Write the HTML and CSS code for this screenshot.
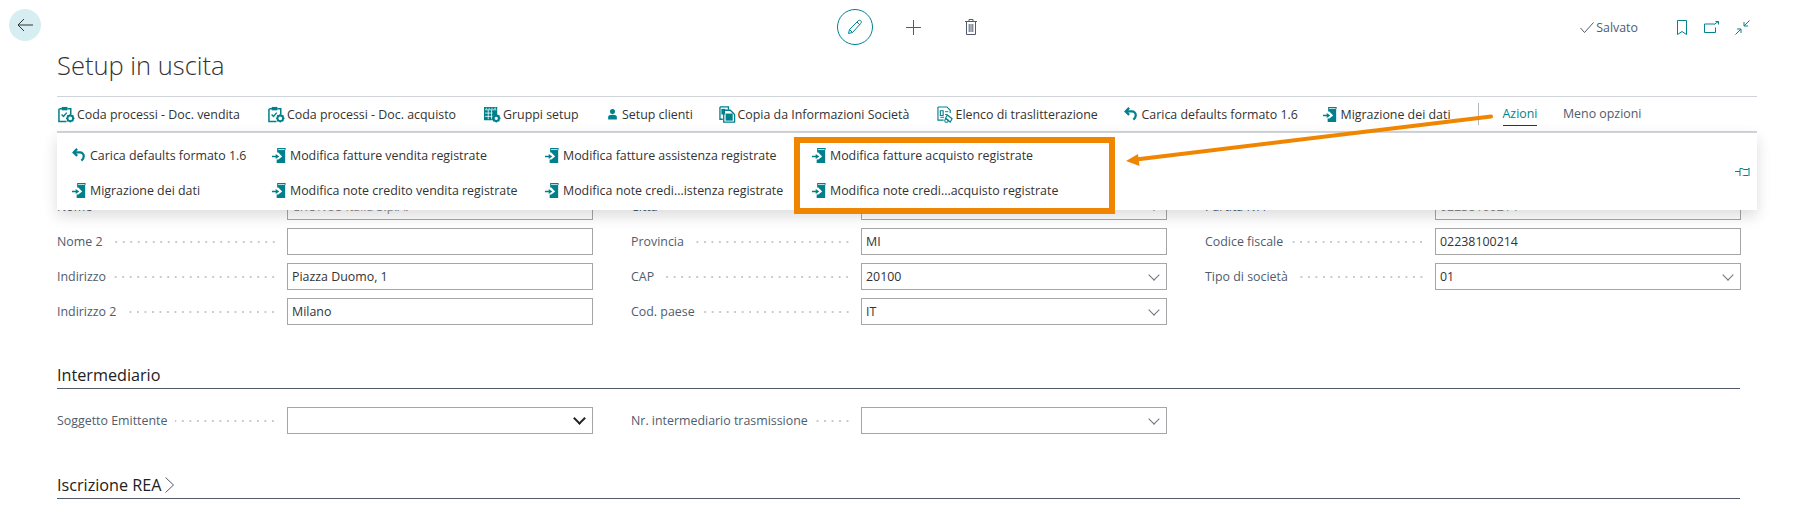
FILE: index.html
```html
<!DOCTYPE html>
<html lang="it">
<head>
<meta charset="utf-8">
<title>Setup in uscita</title>
<link rel="stylesheet" href="styles.css">
</head>
<body>
<svg class="defs" width="0" height="0" aria-hidden="true">
  <symbol id="i-queue" viewBox="0 0 18 18">
    <path d="M1.500 3h3M10 3h3.500v6M1 3v13.500h8" fill="none" stroke="currentColor" stroke-width="1.600"/>
    <rect x="4" y="1" width="6" height="3.600" fill="currentColor"/>
    <path d="M3.800 9l2 2 3.500-4" fill="none" stroke="currentColor" stroke-width="1.500"/>
    <circle cx="13" cy="13" r="3" fill="none" stroke="currentColor" stroke-width="2"/>
    <path d="M13 8.500v2M13 15.500v2M8.500 13h2M15.500 13h2M9.800 9.800l1.400 1.400M14.800 14.800l1.400 1.400M9.800 16.200l1.400-1.400M14.800 11.200l1.400-1.400" stroke="currentColor" stroke-width="1.300"/>
  </symbol>
  <symbol id="i-groups" viewBox="0 0 18 18">
    <path d="M0 1h14v8.500H9.500V15H0z" fill="currentColor"/>
    <path d="M1 4h12M1 7.500h8M1 11h8M4.500 4v10M8 4v10" stroke="#fff" stroke-width=".8"/>
    <path d="M11 1.800h1.500v1h-1.500zM2 1.800h1v1H2zM5 1.800h1v1H5zM8 1.800h1v1H8z" fill="#fff"/>
    <circle cx="13" cy="13" r="2.800" fill="none" stroke="currentColor" stroke-width="2.200"/>
    <path d="M13 8.500v2M13 15.500v2M8.500 13h2M15.500 13h2M9.800 9.800l1.400 1.400M14.800 14.800l1.400 1.400M9.800 16.200l1.400-1.400M14.800 11.200l1.400-1.400" stroke="currentColor" stroke-width="1.400"/>
  </symbol>
  <symbol id="i-user" viewBox="0 0 18 18">
    <circle cx="9" cy="5" r="3.500" fill="currentColor"/>
    <path d="M3 16v-3.500C3 10.500 5 9.500 9 9.500s6 1 6 3V16z" fill="currentColor"/>
  </symbol>
  <symbol id="i-copy" viewBox="0 0 18 18">
    <path d="M1 1h9v3M1 1v13h3" fill="none" stroke="currentColor" stroke-width="1.400"/>
    <path d="M5 4.500h7l4.500 4.500v8H5z" fill="none" stroke="currentColor" stroke-width="1.400"/>
    <rect x="2.500" y="3" width="4" height="6" fill="currentColor"/>
    <rect x="7" y="8" width="7.500" height="7.500" fill="currentColor"/>
  </symbol>
  <symbol id="i-list" viewBox="0 0 18 18">
    <path d="M1 1h9.500l3.500 3.500v3M1 1v14h6" fill="none" stroke="currentColor" stroke-width="1.200"/>
    <path d="M3.500 5h3v5h-3z" fill="none" stroke="currentColor" stroke-width="1.200"/>
    <path d="M8.500 6h3.500M8.500 9h2M3.500 12h4" stroke="currentColor" stroke-width="1"/>
    <path d="M11 9.500l5 4-2 3.500-5-4z" fill="none" stroke="currentColor" stroke-width="1.200"/>
    <circle cx="10" cy="15.500" r="1.800" fill="none" stroke="currentColor" stroke-width="1.100"/>
  </symbol>
  <symbol id="i-undo" viewBox="0 0 18 18">
    <path d="M6.500 2L2.800 5.700l3.700 3.700" fill="none" stroke="currentColor" stroke-width="2.400"/>
    <path d="M3.200 5.700h6.300a4 4 0 0 1 4 4c0 2-1 3.500-2.500 4.800" fill="none" stroke="currentColor" stroke-width="2.400"/>
  </symbol>
  <symbol id="i-doc" viewBox="0 0 18 18">
    <path d="M6.500 1h9v2h-.5v14H6v-3.800h1.800l4-3.200-4-4.200H6.500z" fill="currentColor"/>
    <path d="M7.500 2.700h7" stroke="#fff" stroke-width=".8"/>
    <path d="M1 9.200h4V7.300L8.800 10 5 12.700v-1.900H1z" fill="currentColor"/>
  </symbol>
</svg>

<main class="page">
  <header class="topbar">
    <button class="back" aria-label="Indietro">
      <svg width="16" height="14" viewBox="0 0 16 14"><path d="M7 1L1 7l6 6M1 7h15" fill="none" stroke="#333" stroke-width="1"/></svg>
    </button>
    <div class="center-actions">
      <span class="edit">
        <svg width="16" height="16" viewBox="0 0 16 16"><path d="M1.500 14.500l1-4L11 2c1-1 2-1 2.800-.2s.8 1.800-.2 2.800L5.500 13.500zM2.500 10.500l3 3M10 3l3 3" fill="none" stroke="#00838f" stroke-width="1"/></svg>
      </span>
      <svg class="plus" width="15" height="15" viewBox="0 0 15 15"><path d="M7.500 0v15M0 7.500h15" stroke="#505c6d" stroke-width="1"/></svg>
      <svg class="trash" width="12" height="16" viewBox="0 0 12 16"><path d="M0 2.500h12M4 2.500V.5h4v2M1.500 2.500v13h9v-13" fill="none" stroke="#505c6d" stroke-width="1"/><path d="M4.200 5v8M6 5v8M7.800 5v8" stroke="#505c6d" stroke-width="1"/></svg>
    </div>
    <div class="status">
      <svg class="check" width="14" height="11" viewBox="0 0 14 11"><path d="M.5 6l4 4.500L13.500.5" fill="none" stroke="#505c6d" stroke-width="1"/></svg>
      <span class="saved">Salvato</span>
      <svg class="bookmark" width="10" height="15" viewBox="0 0 10 15"><path d="M.5.500h9v14L5 11.500.5 14.500z" fill="none" stroke="#00838f" stroke-width="1"/></svg>
      <svg class="share" width="15" height="12" viewBox="0 0 15 12"><path d="M10 3H.5v8.500h11V6.500M10 3.500L14.500.5M11.500.5h3v3" fill="none" stroke="#00838f" stroke-width="1"/></svg>
      <svg class="shrink" width="15" height="15" viewBox="0 0 15 15"><path d="M14.500.5L9 6M9 2v4h4M.5 14.500L6 9M2 9h4v4" fill="none" stroke="#00838f" stroke-width="1"/></svg>
    </div>
  </header>

  <h1 class="title">Setup in uscita</h1>

  <nav class="actionbar">
    <a class="action a1"><svg class="ico"><use href="#i-queue"/></svg>Coda processi - Doc. vendita</a>
    <a class="action a2"><svg class="ico"><use href="#i-queue"/></svg>Coda processi - Doc. acquisto</a>
    <a class="action a3"><svg class="ico"><use href="#i-groups"/></svg>Gruppi setup</a>
    <a class="action a4"><svg class="ico small"><use href="#i-user"/></svg>Setup clienti</a>
    <a class="action a5"><svg class="ico"><use href="#i-copy"/></svg>Copia da Informazioni Società</a>
    <a class="action a6"><svg class="ico"><use href="#i-list"/></svg>Elenco di traslitterazione</a>
    <a class="action a7"><svg class="ico"><use href="#i-undo"/></svg>Carica defaults formato 1.6</a>
    <a class="action a8"><svg class="ico"><use href="#i-doc"/></svg>Migrazione dei dati</a>
    <span class="sep"></span>
    <a class="tab active">Azioni</a>
    <a class="tab">Meno opzioni</a>
  </nav>

  <section class="form first">
    <div class="col">
      <div class="row"><label>Nome</label><span class="input ro">CRONUS Italia S.p.A.</span></div>
      <div class="row"><label>Nome 2</label><span class="input"></span></div>
      <div class="row"><label>Indirizzo</label><span class="input">Piazza Duomo, 1</span></div>
      <div class="row"><label>Indirizzo 2</label><span class="input">Milano</span></div>
    </div>
    <div class="col">
      <div class="row"><label>Città</label><span class="input select"></span></div>
      <div class="row"><label>Provincia</label><span class="input">MI</span></div>
      <div class="row"><label>CAP</label><span class="input select">20100</span></div>
      <div class="row"><label>Cod. paese</label><span class="input select">IT</span></div>
    </div>
    <div class="col">
      <div class="row"><label>Partita IVA</label><span class="input ro">02238100214</span></div>
      <div class="row"><label>Codice fiscale</label><span class="input">02238100214</span></div>
      <div class="row"><label>Tipo di società</label><span class="input select">01</span></div>
    </div>
  </section>

  <h2 class="section sec-int">Intermediario</h2>
  <section class="form">
    <div class="col">
      <div class="row"><label>Soggetto Emittente</label><span class="input native"></span></div>
    </div>
    <div class="col">
      <div class="row"><label>Nr. intermediario trasmissione</label><span class="input select"></span></div>
    </div>
    <div class="col"></div>
  </section>

  <h2 class="section sec-rea">Iscrizione REA<svg class="chev" width="9" height="16" viewBox="0 0 9 16"><path d="M.5.500L8.500 8l-8 7.500" fill="none" stroke="#505c6d" stroke-width="1"/></svg></h2>
</main>

<div class="popup">
  <div class="pcol">
    <a class="pitem"><svg class="ico"><use href="#i-undo"/></svg>Carica defaults formato 1.6</a>
    <a class="pitem"><svg class="ico"><use href="#i-doc"/></svg>Migrazione dei dati</a>
  </div>
  <div class="pcol">
    <a class="pitem"><svg class="ico"><use href="#i-doc"/></svg>Modifica fatture vendita registrate</a>
    <a class="pitem"><svg class="ico"><use href="#i-doc"/></svg>Modifica note credito vendita registrate</a>
  </div>
  <div class="pcol">
    <a class="pitem"><svg class="ico"><use href="#i-doc"/></svg>Modifica fatture assistenza registrate</a>
    <a class="pitem"><svg class="ico"><use href="#i-doc"/></svg>Modifica note credi...istenza registrate</a>
  </div>
  <div class="pcol">
    <a class="pitem"><svg class="ico"><use href="#i-doc"/></svg>Modifica fatture acquisto registrate</a>
    <a class="pitem"><svg class="ico"><use href="#i-doc"/></svg>Modifica note credi...acquisto registrate</a>
  </div>
  <svg class="pin" width="15" height="9" viewBox="0 0 15 9"><path d="M0 4.500h5M5 1.500h2l2 1h4l1-1.500v9l-1-1.500H9l-2 1H5z" fill="none" stroke="#00838f" stroke-width="1"/></svg>
</div>

<div class="callout"></div>
<svg class="arrow" width="1801" height="506" viewBox="0 0 1801 506" aria-hidden="true">
  <path d="M1491 116.500L1136 159.500" stroke="#f08600" stroke-width="4" stroke-linecap="round" fill="none"/>
  <path d="M1126 161l12-7 1.500 12z" fill="#f08600"/>
</svg>
</body>
</html>
```
FILE: styles.css
```css
* { box-sizing: border-box; }
html, body { margin: 0; height: 506px; overflow: hidden; background: #fff; }
body {
  position: relative;
  font-family: "Open Sans", "Noto Sans", sans-serif;
  font-size: 12.4px;
  color: #333;
}
.defs { position: absolute; }
.page { padding: 0 61px 0 57px; }

.topbar { display: flex; align-items: flex-start; height: 45px; padding-top: 9px; margin-left: -48px; margin-right: -10px; }
.back {
  width: 32px; height: 32px; border: 0; padding: 0; border-radius: 50%;
  background: #d6eef1; display: flex; align-items: center; justify-content: center;
}
.center-actions { display: flex; align-items: center; height: 36px; margin-left: 796px; }
.edit {
  width: 36px; height: 36px; border: 1px solid #00838f; border-radius: 50%;
  display: flex; align-items: center; justify-content: center;
}
.plus { margin-left: 32.5px; }
.trash { margin-left: 44px; }
.status { display: flex; align-items: center; height: 36px; margin-left: auto; }
.saved { margin-left: 2px; color: #505c6d; }
.bookmark { margin-left: 39px; }
.share { margin-left: 17px; }
.shrink { margin-left: 16px; }

.title {
  margin: 0; height: 51px; padding-top: 4px;
  font-size: 25.5px; line-height: 32px; font-weight: 300; color: #333;
}
.actionbar {
  display: flex; align-items: center; height: 36px; margin-right: -17px;
  border-top: 1px solid #d0d3d8; border-bottom: 1px solid #d0d3d8;
  white-space: nowrap;
}
.action { display: flex; align-items: center; color: #333; }
.ico { width: 17px; height: 17px; color: #00808c; margin-right: 2px; flex: none; }
.ico.small { width: 13px; height: 15px; margin-right: 3px; }
.a1 { margin-left: 1px; width: 210px; }
.a2 { width: 216px; }
.a3 { width: 122px; }
.a4 { width: 112.5px; }
.a5 { width: 218px; }
.a6 { width: 186px; }
.a7 { width: 199px; }
.a8 { width: 156px; }
.sep { width: 1px; height: 22px; background: #b5b9bf; margin-right: 24px; }
.tab { color: #505c6d; margin-right: 25.5px; line-height: 24px; height: 24px; }
.tab.active { color: #00838f; border-bottom: 1px solid #333; }

.form { display: flex; gap: 38px; }
.form.first { margin-top: 61px; }
.col { display: flex; flex-direction: column; gap: 8px; width: 536px; flex: none; }
.row { display: flex; align-items: center; height: 27px; }
.row label {
  flex: 1; display: flex; align-items: center; color: #505c6d; margin-right: 10px; white-space: nowrap; min-width: 0;
}
.row label::after {
  content: ""; flex: 1; height: 2px; margin-left: 8px; min-width: 0;
  background-image: radial-gradient(circle, #c6cad0 .7px, transparent .8px);
  background-size: 7.5px 2px; background-position: right center; background-repeat: repeat-x;
}
.input {
  width: 306px; height: 27px; border: 1px solid #a6a6a6; padding: 0 4px;
  display: flex; align-items: center; color: #333; position: relative; flex: none;
}
.input.ro { color: #8a8a8a; }
.select::after {
  content: ""; position: absolute; right: 8.5px; top: 6.5px; width: 7px; height: 7px;
  border-right: 1px solid #6b7480; border-bottom: 1px solid #6b7480; transform: rotate(45deg);
}
.native::after {
  content: ""; position: absolute; right: 8px; top: 6px; width: 7px; height: 7px;
  border-right: 2px solid #222; border-bottom: 2px solid #222; transform: rotate(45deg);
}
.section {
  margin: 0; font-weight: 400; color: #212121; font-size: 16.2px; line-height: 22px;
  border-bottom: 1px solid #505c6d; display: flex; align-items: flex-end; padding-bottom: 2px;
}
.sec-int { height: 31px; margin-top: 33px; margin-bottom: 18px; }
.sec-rea { height: 31px; margin-top: 34px; }
.chev { margin: 0 0 3px 3px; }

.popup {
  position: absolute; left: 57px; top: 132px; width: 1700px; height: 78px;
  padding: 7px 0 0 14px;
  display: grid; grid-template-columns: 200px 273px 267px 1fr;
  background: #fff; border-top: 1px solid #d0d3d8;
  box-shadow: 0 6px 14px rgba(0,0,0,.14);
}
.pcol { display: flex; flex-direction: column; gap: 5px; }
.pitem { display: flex; align-items: center; height: 30px; white-space: nowrap; color: #333; }
.pin { position: absolute; left: 1678px; top: 34px; }

.callout {
  position: absolute; left: 794px; top: 137px; width: 321px; height: 77px;
  border: 6px solid #f08600;
}
.arrow { position: absolute; left: 0; top: 0; pointer-events: none; }
```
